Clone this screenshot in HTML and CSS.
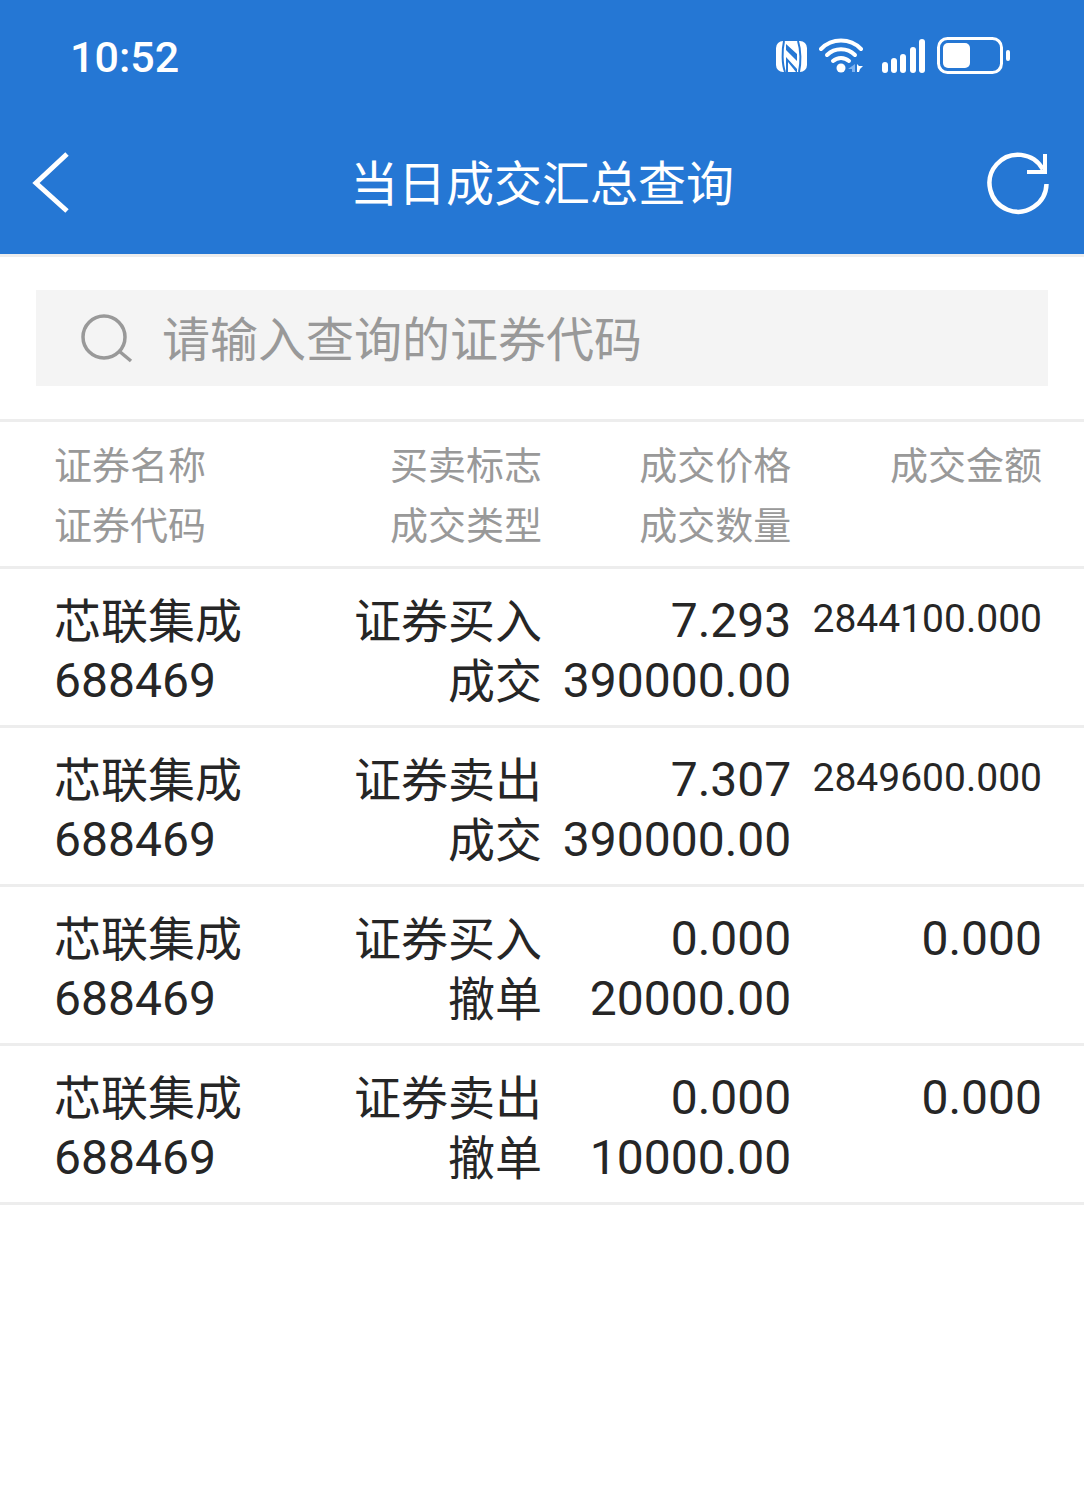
FILE: index.html
```html
<!DOCTYPE html>
<html lang="zh-CN">
<head>
    <meta charset="UTF-8">
    <meta name="viewport" content="width=device-width, initial-scale=1.0">
    <title>当日成交汇总查询</title>
    <link rel="stylesheet" href="styles.css">
</head>
<body>
    <header class="top">
        <!-- 状态栏 -->
        <div class="status-bar">
            <span class="time">10:52</span>
            <div class="status-icons">
                <svg width="32" height="36" viewBox="0 0 32 36" aria-hidden="true">
                    <rect x="0" y="3" width="31" height="31" rx="7" fill="#fff"/>
                    <path d="M8 3C6 12 6 26 9 34M22 3c3 9 3 22 1 31" fill="none" stroke="#2577d4" stroke-width="2"/>
                    <path d="M10 6l11 10v7L10 12zM10 19l11 12v3H10z" fill="#2577d4"/>
                    <path d="M12 24v10h8z" fill="#fff"/>
                </svg>
                <svg class="wifi" width="45" height="36" viewBox="0 0 45 36" aria-hidden="true">
                    <g fill="none" stroke="#fff" stroke-width="4" stroke-linecap="round">
                        <path d="M2 11a28 28 0 0 1 40 0"/>
                        <path d="M8 17a20 20 0 0 1 28 0"/>
                        <path d="M14 23a12 12 0 0 1 16 0"/>
                    </g>
                    <circle cx="22" cy="30" r="4.5" fill="#fff"/>
                    <path d="M36 26v8h-3v-3h-4z" fill="#7fb2ef"/>
                    <path d="M38 26l2 2h4l-3 3-1 3h-2z" fill="#fff"/>
                </svg>
                <svg class="signal" width="44" height="36" viewBox="0 0 44 36" fill="#fff" aria-hidden="true">
                    <rect x="0" y="24" width="6" height="11" rx="3"/>
                    <rect x="9" y="20" width="6" height="15" rx="3"/>
                    <rect x="18" y="16" width="6" height="19" rx="3"/>
                    <rect x="28" y="9" width="6" height="26" rx="3"/>
                    <rect x="37" y="1" width="6" height="34" rx="3"/>
                </svg>
                <svg class="battery" width="74" height="38" viewBox="0 0 74 38" aria-hidden="true">
                    <rect x="1.5" y="1.5" width="63" height="34" rx="9" fill="none" stroke="#fff" stroke-width="3"/>
                    <rect x="6" y="6" width="27" height="25" rx="5" fill="#fff"/>
                    <rect x="69" y="13" width="4" height="11" rx="2" fill="#fff"/>
                </svg>
            </div>
        </div>
        <!-- 标题栏 -->
        <nav class="nav-bar">
            <button class="nav-btn" type="button" aria-label="返回">
                <svg width="38" height="64" viewBox="0 0 38 64" aria-hidden="true">
                    <path d="M35 3L4 32l31 28" fill="none" stroke="#fff" stroke-width="5"/>
                </svg>
            </button>
            <h1>当日成交汇总查询</h1>
            <button class="nav-btn" type="button" aria-label="刷新">
                <svg width="66" height="64" viewBox="0 0 66 64" aria-hidden="true">
                    <path d="M60.500 33A28.500 28.500 0 1 1 57 18.500" fill="none" stroke="#fff" stroke-width="4.500"/>
                    <path d="M59 3v18H41" fill="none" stroke="#fff" stroke-width="4"/>
                </svg>
            </button>
        </nav>
    </header>

    <main>
        <div class="search-area">
            <label class="search-box">
                <svg width="54" height="50" viewBox="0 0 54 50" fill="none" stroke="#999" stroke-width="3.500" aria-hidden="true">
                    <circle cx="24" cy="24" r="21"/>
                    <path d="M39 38l12 10"/>
                </svg>
                <input type="text" placeholder="请输入查询的证券代码" aria-label="请输入查询的证券代码">
            </label>
        </div>

        <table class="deals">
            <thead>
                <tr>
                    <th>证券名称<br>证券代码</th>
                    <th>买卖标志<br>成交类型</th>
                    <th>成交价格<br>成交数量</th>
                    <th>成交金额</th>
                </tr>
            </thead>
            <tbody>
                <tr>
                    <td>芯联集成<span class="code">688469</span></td>
                    <td>证券买入<br>成交</td>
                    <td class="num">7.293<br>390000.00</td>
                    <td class="num long">2844100.000</td>
                </tr>
                <tr>
                    <td>芯联集成<span class="code">688469</span></td>
                    <td>证券卖出<br>成交</td>
                    <td class="num">7.307<br>390000.00</td>
                    <td class="num long">2849600.000</td>
                </tr>
                <tr>
                    <td>芯联集成<span class="code">688469</span></td>
                    <td>证券买入<br>撤单</td>
                    <td class="num">0.000<br>20000.00</td>
                    <td class="num">0.000</td>
                </tr>
                <tr>
                    <td>芯联集成<span class="code">688469</span></td>
                    <td>证券卖出<br>撤单</td>
                    <td class="num">0.000<br>10000.00</td>
                    <td class="num">0.000</td>
                </tr>
            </tbody>
        </table>
    </main>
</body>
</html>
```
FILE: styles.css
```css
:root {
    --blue: #2577d4;
    --line: #ededed;
    --gray: #999;
    --text: #262626;
}

* {
    box-sizing: border-box;
}

body {
    margin: 0;
    background-color: #fff;
    color: var(--text);
    font-family: "Noto Sans CJK SC", sans-serif;
}

.top {
    background-color: var(--blue);
    color: #fff;
    border-bottom: 3px solid var(--line);
}

/* 状态栏 */
.status-bar {
    display: flex;
    justify-content: space-between;
    align-items: center;
    height: 112px;
    padding: 0 73px 0 70px;
}

.time {
    padding-top: 2px;
    font-family: Roboto, sans-serif;
    font-size: 43px;
    font-weight: 500;
    line-height: 60px;
}

.status-icons {
    display: flex;
    align-items: center;
    gap: 11px;
}

.signal {
    margin-left: 7px;
}

/* 标题栏 */
.nav-bar {
    display: flex;
    justify-content: space-between;
    align-items: center;
    height: 142px;
    padding: 0 32px;
}

.nav-bar h1 {
    margin: 0;
    padding-bottom: 6px;
    font-size: 48px;
    font-weight: 400;
    line-height: 60px;
}

.nav-btn {
    display: flex;
    width: 66px;
    padding: 0;
    border: none;
    background: none;
    cursor: pointer;
}

/* 搜索框 */
.search-area {
    padding: 33px 36px;
    border-bottom: 3px solid var(--line);
}

.search-box {
    display: flex;
    align-items: center;
    gap: 28px;
    height: 96px;
    padding: 0 44px;
    background-color: #f4f4f4;
}

.search-box input {
    flex: 1;
    min-width: 0;
    height: 76px;
    padding: 0 0 4px;
    border: none;
    outline: none;
    background: none;
    color: var(--text);
    font-family: inherit;
    font-size: 48px;
}

.search-box input::placeholder {
    color: var(--gray);
}

/* 成交列表 */
.deals {
    width: 100%;
    table-layout: fixed;
    border-collapse: separate;
    border-spacing: 0;
}

.deals th,
.deals td {
    border-bottom: 3px solid var(--line);
    line-height: 60px;
    text-align: right;
    vertical-align: top;
    white-space: nowrap;
}

.deals th {
    width: 23%;
    padding: 11px 0 13px;
    color: var(--gray);
    font-size: 38px;
    font-weight: 400;
}

.deals td {
    padding: 19px 0 14px;
    font-size: 47px;
}

.deals th:first-child,
.deals td:first-child {
    width: 27%;
    padding-left: 54px;
    text-align: left;
}

.deals th:last-child,
.deals td:last-child {
    width: 27%;
    padding-right: 42px;
}

.deals .num,
.deals .code {
    font-family: Roboto, sans-serif;
    font-size: 48px;
}

.deals .num {
    padding-top: 22px;
}

.deals .code {
    display: block;
    padding-top: 3px;
}

/* 金额过长时缩小字号 */
.deals .long {
    padding-top: 20px;
    font-size: 39px;
}
```
